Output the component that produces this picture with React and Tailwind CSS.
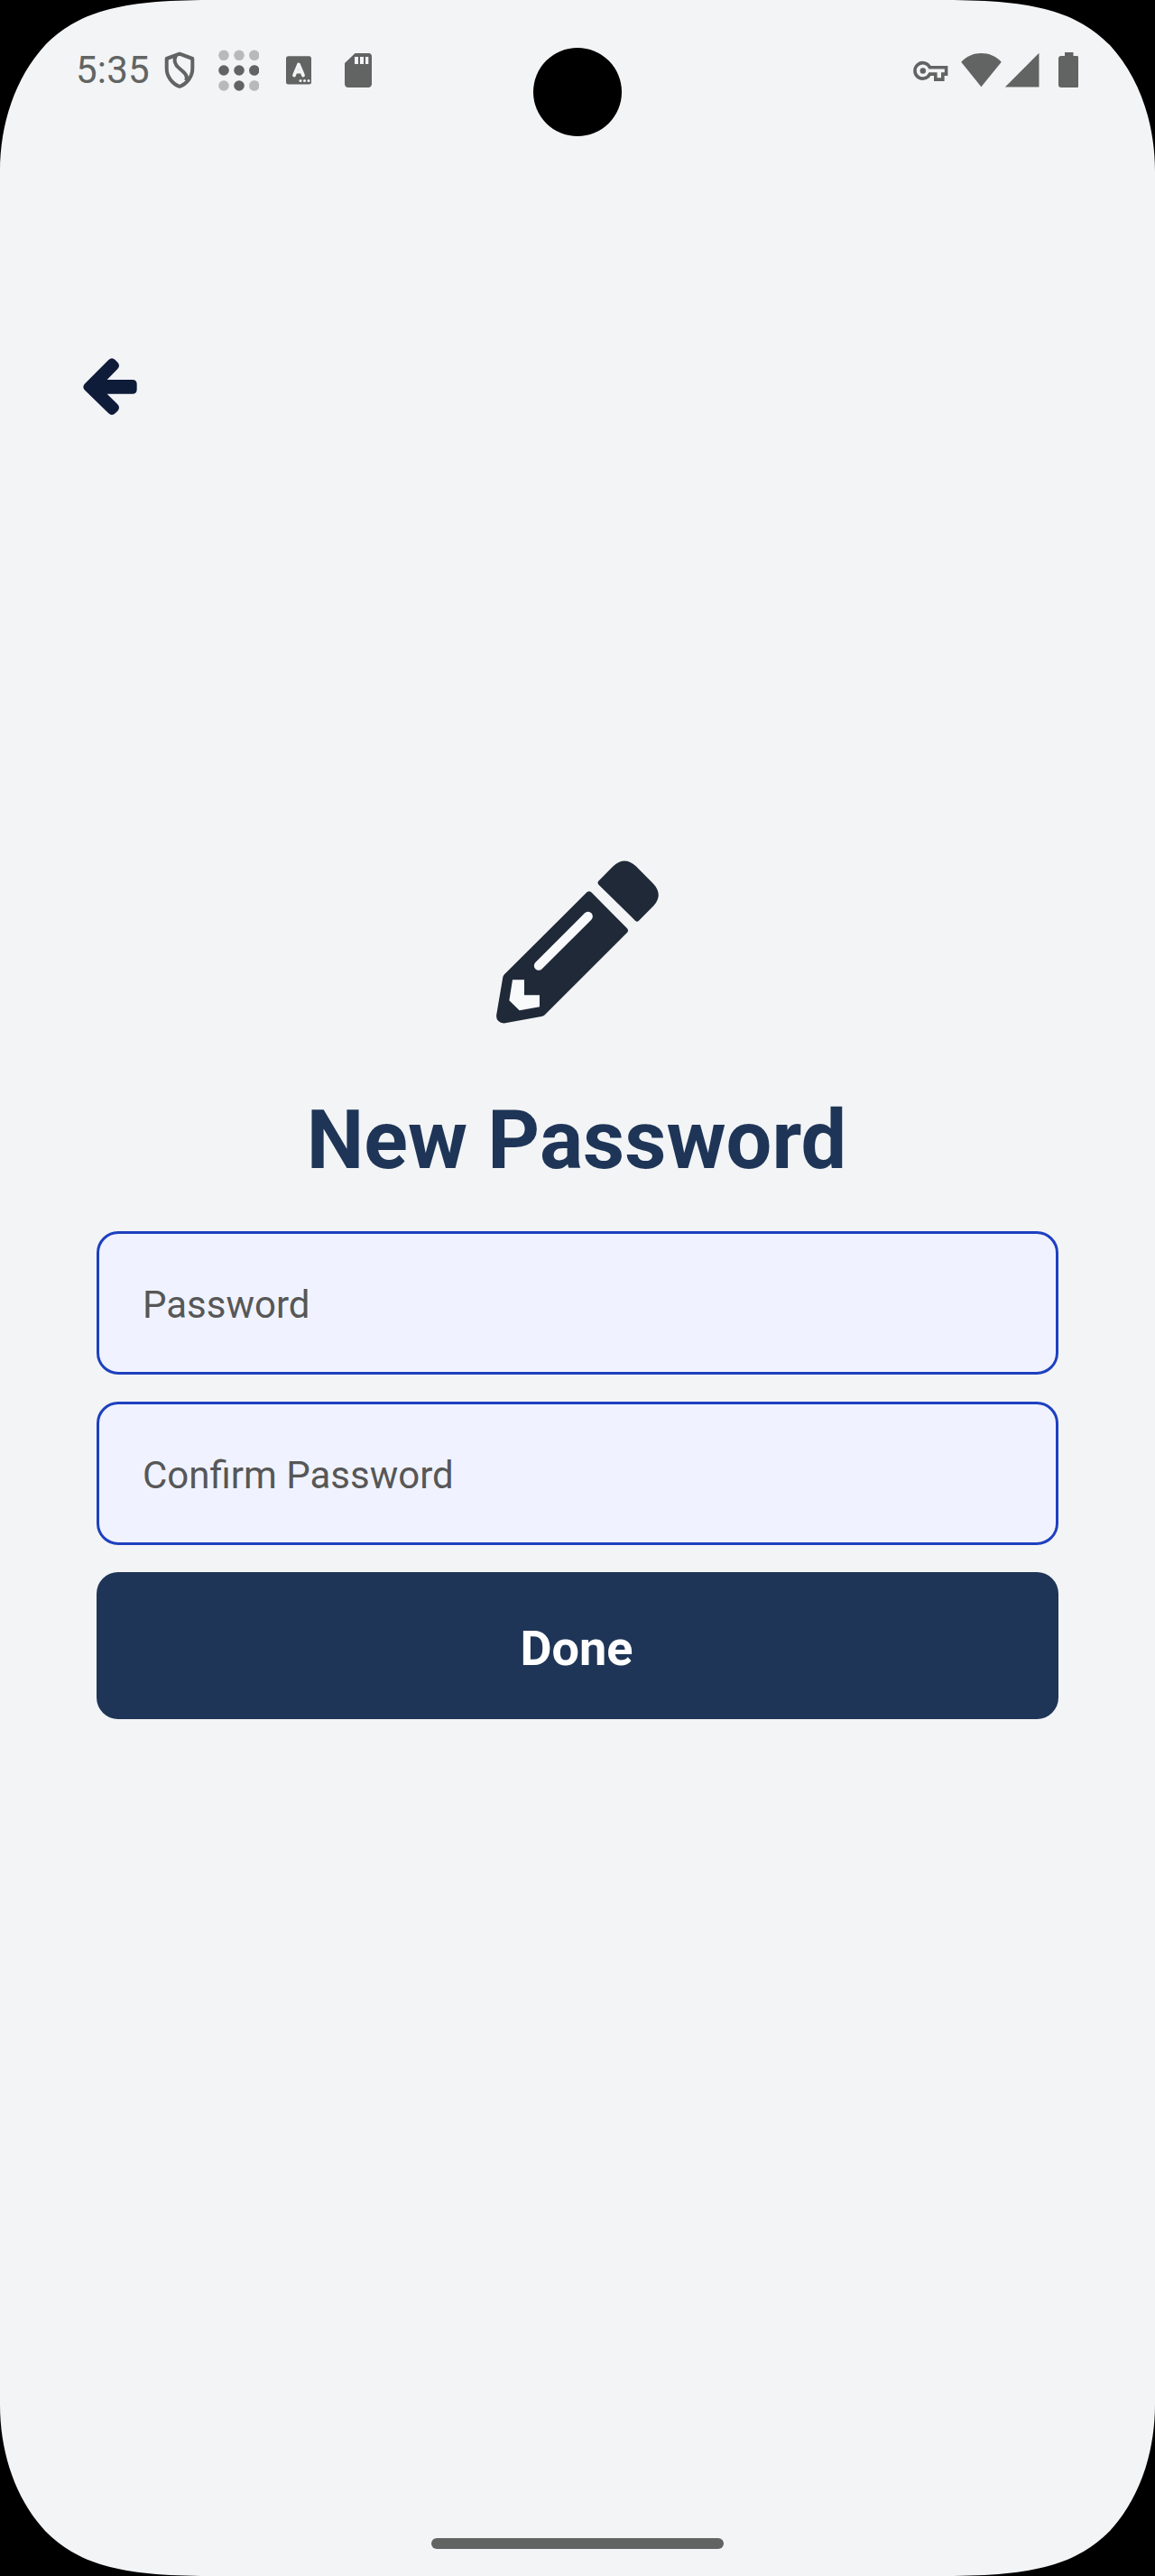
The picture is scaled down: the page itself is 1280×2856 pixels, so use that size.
const corner = "M0 0H232C131 0 86 14 50 50C17 86 0 137 0 190Z";

function Corner({ className }) {
  return (
    <svg className={"absolute h-[190px] w-[232px] " + className} viewBox="0 0 232 190" aria-hidden="true">
      <path d={corner} fill="#000" />
    </svg>
  );
}

function LeftIcons() {
  return (
    <svg className="h-20 w-[250px]" viewBox="0 0 250 80" fill="#616462" aria-hidden="true">
      {/* shield */}
      <g fill="none" stroke="#616462" strokeWidth="4" strokeLinejoin="round">
        <path d="M19 19.7L33.3 25V36C33.3 45 27 53 19 56C11 53 4.7 45 4.7 36V25Z" />
        <path d="M15 21.5C12 27 14 32 19 36C25 41 28.5 44 26.3 49.5" />
      </g>
      {/* dot grid */}
      <g opacity="0.4">
        <circle cx="68" cy="21.3" r="5.8" />
        <circle cx="85" cy="21.3" r="5.8" />
        <path d="M107 18.7A5.8 5.8 0 1 0 107 23.9Z" />
        <circle cx="68" cy="55" r="5.8" />
        <path d="M107 52.4A5.8 5.8 0 1 0 107 57.6Z" />
      </g>
      <circle cx="68" cy="38" r="5.8" />
      <circle cx="85" cy="38" r="5.8" />
      <path d="M107 35.4A5.8 5.8 0 1 0 107 40.6Z" />
      <circle cx="85" cy="55" r="5.8" />
      {/* keyboard letter badge */}
      <rect x="137" y="22.3" width="28" height="31.3" rx="2.5" />
      <path d="M146 43.5L151 31.5L156 43.5M147.5 39.5H154.5" fill="none" stroke="#f3f4f6" strokeWidth="3.8" strokeLinecap="round" strokeLinejoin="round" />
      <g fill="#f3f4f6">
        <circle cx="153" cy="49.6" r="1.5" />
        <circle cx="157.5" cy="49.6" r="1.5" />
        <circle cx="162" cy="49.6" r="1.5" />
      </g>
      {/* memory card */}
      <path fillRule="evenodd" d="M213.5 19H228.5A3.7 3.7 0 0 1 232 22.7V53A3.8 3.8 0 0 1 228.2 57H206A3.8 3.8 0 0 1 202 53V30ZM213 23V31H217V23ZM219 23V31H223V23ZM225 23V31H228.3V23Z" />
    </svg>
  );
}

function RightIcons() {
  return (
    <svg className="h-20 w-[190px]" viewBox="0 0 190 80" fill="#616462" aria-hidden="true">
      {/* key */}
      <path d="M25.5 34.7H43.6V42.1H39.8V48.1H31.8V42.1H25.5A8.7 8.7 0 1 1 25.5 34.7Z" fill="none" stroke="#616462" strokeWidth="3.6" />
      <circle cx="17.8" cy="38.5" r="3.2" />
      {/* wifi */}
      <path d="M60.2 28.7C72 15.7 93 15.7 104.8 28.7L82.4 56.3Z" />
      {/* signal */}
      <path d="M146.5 18.7V56.5H108.9Z" />
      {/* battery */}
      <path d="M175 18H184.5V22H188A3 3 0 0 1 191 25V54A3 3 0 0 1 188 57H171A3 3 0 0 1 168 54V25A3 3 0 0 1 171 22H175Z" />
    </svg>
  );
}

function BackArrow() {
  return (
    <svg className="h-[100px] w-[100px]" viewBox="0 0 300 300" fill="#0f1c39" aria-hidden="true">
      <path d="M71 137L151 57Q162 47 173 57L181 65Q191 76 181 87L146 123H230Q245 123 245 138V155Q245 170 230 170H146L181 205Q191 216 181 227L173 235Q162 245 151 235L71 157Q63 147 71 137Z" />
    </svg>
  );
}

function Pencil() {
  return (
    <svg className="h-[220px] w-[220px]" viewBox="0 0 660 660" aria-hidden="true">
      <g fill="#1f2937">
        <path d="M400 140L449 91Q486 56 524 91L582 149Q616 186 583 223L534 272Q528 278 522 272L400 152Q395 146 400 140Z" />
        <path d="M361 178Q368 171 376 178L495 298Q501 305 495 312L224 583Q220 588 213 590L90 613Q75 615 67 606Q58 598 61 583L82 460Q83 455 87 451Z" />
      </g>
      <path d="M201 422L365 258" stroke="#f8f9fb" strokeWidth="31" strokeLinecap="round" />
      <path d="M114 469H153V520H204V559L137 571L103 538Z" fill="#f8f9fb" />
    </svg>
  );
}

function Field({ label }) {
  return (
    <input
      type="password"
      aria-label={label}
      placeholder={label}
      className="h-[159px] w-full rounded-[24px] border-[3px] border-[#1e40bf] bg-[#f0f3ff] pt-[3px] pl-[48px] text-[42px] text-[#575757] outline-none placeholder:text-[#575757] placeholder:opacity-100"
    />
  );
}

export default function App() {
  return (
    <div className="relative flex h-[2856px] w-[1280px] flex-col overflow-hidden bg-[#f3f4f6] font-['Roboto',sans-serif]">
      <header className="flex h-[160px] items-start justify-between pt-10 pr-[85px] pl-[84px]">
        <div className="flex">
          <span className="w-[96px] pt-[12px] text-[42px] leading-[52px] tracking-[0.2px] text-[#616462]">5:35</span>
          <LeftIcons />
        </div>
        <RightIcons />
      </header>
      <div className="flex h-[770px] items-start pt-[220px] pl-[70px]">
        <button type="button" aria-label="Back">
          <BackArrow />
        </button>
      </div>
      <main className="flex flex-1 flex-col items-center px-[107px]">
        <Pencil />
        <h1 className="mt-[62px] h-[153px] pr-[2px] text-[90px] leading-[106px] font-bold text-[#1e3557]">New Password</h1>
        <form className="flex w-full flex-col gap-[30px]">
          <Field label="Password" />
          <Field label="Confirm Password" />
          <button type="button" className="h-[163px] w-full rounded-[24px] bg-[#1e3557] pt-[6px] pr-[2px] text-[54px] font-bold text-white">
            Done
          </button>
        </form>
      </main>
      <footer className="flex h-[42px] justify-center">
        <div className="h-[12px] w-[324px] rounded-full bg-[#616462]" />
      </footer>
      <div className="absolute top-[53px] left-[591px] h-[98px] w-[98px] rounded-full bg-black" />
      <Corner className="top-0 left-0" />
      <Corner className="top-0 right-0 -scale-x-100" />
      <Corner className="bottom-0 left-0 -scale-y-100" />
      <Corner className="right-0 bottom-0 -scale-100" />
    </div>
  );
}
